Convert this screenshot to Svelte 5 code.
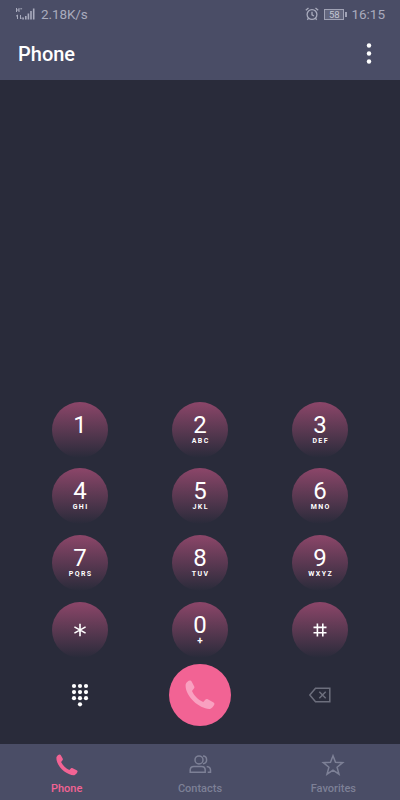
<script>
  const keys = [
    { digit: "1", letters: "" },
    { digit: "2", letters: "ABC" },
    { digit: "3", letters: "DEF" },
    { digit: "4", letters: "GHI" },
    { digit: "5", letters: "JKL" },
    { digit: "6", letters: "MNO" },
    { digit: "7", letters: "PQRS" },
    { digit: "8", letters: "TUV" },
    { digit: "9", letters: "WXYZ" },
    { digit: "*", letters: "" },
    { digit: "0", letters: "+" },
    { digit: "#", letters: "" }
  ];

  const tabs = ["Phone", "Contacts", "Favorites"];
  const dots = [0, 1, 2, 3, 4, 5, 6, 7, 8];

  let active = $state("Phone");
</script>

{#snippet handset()}
  <path d="M.7 4.200C1.500 2.200 3.200.8 5 .6c.7-.1 1.200.3 1.600 1l2.500 4.600c.5.900.4 1.600-.2 2.400L7 10.900c1.800 4.200 6 8.900 11.200 11l2.300-2.300c.6-.6 1.400-.7 2.200-.3l5.500 3c1.200.7 1.500 1.400 1 2.400-.8 1.900-2.300 3.600-4.200 4.200C14.500 29.600-.9 15.500.7 4.200z" />
{/snippet}

<div class="app">
  <header>
    <div class="status">
      <svg class="signal" width="21" height="14" viewBox="0 0 21 14">
        <path d="M1.500 1v4M4 1v4M1.500 3H4M5.300 1.800h1.800M2.500 12V8L1 9.300M5.500 8v4l1.300-1.300" fill="none" stroke="currentColor" stroke-width="1" />
        <path d="M7.300 10.500h1.600v2H7.300zM10 9h1.600v3.500H10zM12.600 6.500h1.600v6h-1.600zM15.200 4h1.600v8.500h-1.600zM17.900 1.500h1.600v11h-1.600z" fill="currentColor" />
      </svg>
      <span class="speed">2.18K/s</span>
      <svg class="alarm" width="14" height="14" viewBox="0 0 14 14" fill="none" stroke="currentColor" stroke-width="1.300">
        <circle cx="7" cy="7.500" r="4.900" />
        <path d="M7 4.800v3l2 1.200M.8 3.300l2.700-2.200M13.200 3.300l-2.700-2.200M3.600 11.200l-1.300 1.500M10.400 11.200l1.300 1.500" />
      </svg>
      <span class="battery">58</span>
      <span class="clock">16:15</span>
    </div>
    <div class="bar">
      <h1>Phone</h1>
      <button class="more" aria-label="More">
        <svg width="6" height="22" viewBox="0 0 6 22" fill="#fff">
          <circle cx="3" cy="2.500" r="2.200" />
          <circle cx="3" cy="10.500" r="2.200" />
          <circle cx="3" cy="18.500" r="2.200" />
        </svg>
      </button>
    </div>
  </header>

  <main>
    <div class="keypad">
      {#each keys as key}
        <button class="key" class:symbol={key.digit === "*" || key.digit === "#"} aria-label={key.digit}>
          {#if key.digit === "*"}
            <svg width="14" height="14" viewBox="0 0 14 14">
              <path d="M7 .8v12.400M1.400 3.900l11.200 6.200M12.600 3.900L1.400 10.100" />
            </svg>
          {:else if key.digit === "#"}
            <svg width="14" height="14" viewBox="0 0 14 14">
              <path d="M4.400.5v13M9.800.5v13M.5 4.400h13M.5 9.800h13" />
            </svg>
          {:else}
            <span class="digit">{key.digit}</span>
            {#if key.letters}
              <span class="letters" class:plus={key.letters === "+"}>{key.letters}</span>
            {/if}
          {/if}
        </button>
      {/each}
    </div>

    <div class="actions">
      <button class="pad" aria-label="Keypad">
        <svg width="18" height="24" viewBox="0 0 18 24" fill="#fff">
          {#each dots as i}
            <circle cx={3 + (i % 3) * 6} cy={3 + Math.floor(i / 3) * 6.100} r="2.100" />
          {/each}
          <circle cx="9" cy="21.300" r="2.100" />
        </svg>
      </button>
      <button class="call" aria-label="Call">
        <svg width="30" height="30" viewBox="0 0 30 30" fill="#f9a0c0">
          {@render handset()}
        </svg>
      </button>
      <button class="erase" aria-label="Backspace">
        <svg width="24" height="16" viewBox="0 0 24 16" fill="none" stroke="currentColor" stroke-width="1.500">
          <path d="M7.500 1.200h14.300v13.600H7.500L1.800 8zM11.300 4.800l6.400 6.400M17.700 4.800l-6.400 6.400" />
        </svg>
      </button>
    </div>
  </main>

  <nav>
    {#each tabs as tab}
      <button class="tab" class:active={active === tab} onclick={() => active = tab}>
        {#if tab === "Phone"}
          <svg width="22" height="22" viewBox="0 0 30 30" fill="currentColor">
            {@render handset()}
          </svg>
        {:else if tab === "Contacts"}
          <svg width="24" height="22" viewBox="0 0 24 22" fill="none" stroke="currentColor" stroke-width="1.500">
            <circle cx="11" cy="5.900" r="4" />
            <path d="M2.200 18.200v-2.100c0-2.400 1.500-3.700 3.700-3.700h7.600c2.200 0 3.700 1.300 3.700 3.700v2.100zM15 2c4.800 0 4.800 7.800 0 7.800M18.700 12.400c2.400.2 3.800 1.600 3.800 3.700v2.100h-2.800" />
          </svg>
        {:else}
          <svg width="24" height="22" viewBox="0 0 24 22" fill="none" stroke="currentColor" stroke-width="1.500">
            <path d="M12 1.800l2.500 6.500 7.200.4-5.600 4.500 1.900 7L12 16.200l-6 4 1.900-7-5.600-4.500 7.200-.4z" />
          </svg>
        {/if}
        <span>{tab}</span>
      </button>
    {/each}
  </nav>
</div>

<style>
  :global(body) {
    margin: 0;
  }

  .app {
    display: flex;
    flex-direction: column;
    width: 400px;
    height: 800px;
    overflow: hidden;
    background: #292b3a;
    color: #fff;
    font-family: Roboto, sans-serif;
  }

  button {
    display: flex;
    align-items: center;
    justify-content: center;
    padding: 0;
    border: 0;
    background: none;
    color: inherit;
    font: inherit;
  }

  svg {
    display: block;
  }

  header {
    height: 80px;
    background: #4a4d66;
  }

  .status {
    display: flex;
    align-items: center;
    box-sizing: border-box;
    height: 28px;
    padding: 0 15px;
    color: #a9abbd;
    font-size: 14px;
  }

  .speed {
    margin-left: 5px;
    font-size: 13.500px;
    letter-spacing: -.1px;
  }

  .alarm {
    margin-left: auto;
  }

  .clock {
    font-size: 13.500px;
  }

  .battery {
    position: relative;
    box-sizing: border-box;
    width: 20px;
    height: 11px;
    margin: 0 7px 0 5px;
    border: 1px solid #a0a2b5;
    background: #62657d;
    color: #c3c5d2;
    font-size: 9.500px;
    line-height: 9px;
    text-align: center;
  }

  .battery::after {
    position: absolute;
    top: 2px;
    right: -4px;
    width: 2px;
    height: 5px;
    background: #a0a2b5;
    content: "";
  }

  .bar {
    display: flex;
    align-items: center;
    justify-content: space-between;
    height: 52px;
    padding: 0 28px 0 18px;
  }

  h1 {
    margin: 0;
    font-size: 20px;
    font-weight: 500;
  }

  main {
    display: flex;
    flex: 1;
    flex-direction: column;
    justify-content: flex-end;
    padding: 0 20px 18.500px;
  }

  .keypad {
    display: grid;
    grid-template-columns: repeat(3, 1fr);
    grid-auto-rows: 56px;
    row-gap: 10.600px;
    justify-items: center;
  }

  .key {
    flex-direction: column;
    justify-content: flex-start;
    box-sizing: border-box;
    width: 56px;
    height: 56px;
    padding-top: 12px;
    border-radius: 50%;
    background: linear-gradient(#8c4669, #292b3a);
  }

  .symbol {
    justify-content: center;
    padding-top: 1px;
  }

  .symbol svg {
    fill: none;
    stroke: #fff;
    stroke-width: 1.600;
  }

  .digit {
    font-size: 24px;
    line-height: 23px;
  }

  .letters {
    margin-right: -1.400px;
    font-size: 7px;
    font-weight: 700;
    letter-spacing: 1.400px;
    line-height: 8px;
  }

  .plus {
    margin-right: 0;
    font-size: 10px;
    letter-spacing: 0;
  }

  .actions {
    display: grid;
    grid-template-columns: repeat(3, 1fr);
    align-items: center;
    justify-items: center;
    margin-top: 6px;
  }

  .call {
    width: 62px;
    height: 62px;
    border-radius: 50%;
    background: #f26394;
  }

  .erase {
    color: #6d6f7d;
  }

  nav {
    display: flex;
    height: 56px;
    background: #4a4d66;
  }

  .tab {
    flex: 1;
    flex-direction: column;
    justify-content: flex-start;
    gap: 6px;
    padding-top: 10px;
    color: #7d8096;
    font-size: 11px;
    font-weight: 500;
    line-height: 14px;
  }

  .active {
    color: #f26394;
  }
</style>
